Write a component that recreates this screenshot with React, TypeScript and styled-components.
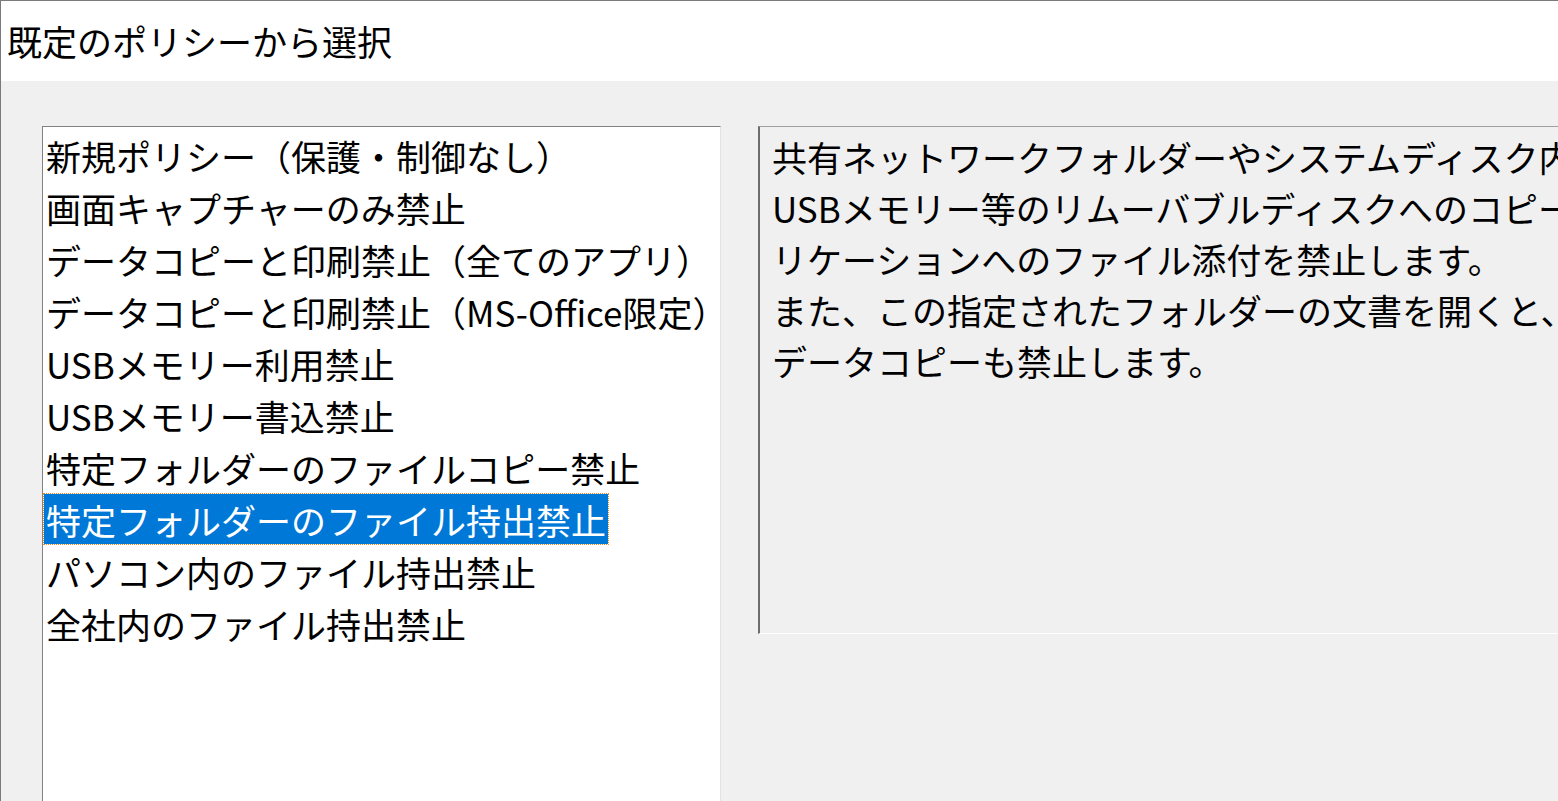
import * as React from 'react';
import styled, { createGlobalStyle } from 'styled-components';

const Global = createGlobalStyle`
	html, body { margin: 0; padding: 0; }
	body {
		width: 1558px;
		height: 801px;
		overflow: hidden;
		background: #f0f0f0;
		font-family: "Noto Sans CJK JP", "Noto Sans", sans-serif;
		color: #000;
	}
`;

const Window = styled.div`
	width: 1558px;
	height: 801px;
	border-left: 1px solid #7a7a7a;
	border-top: 1px solid #7a7a7a;
	box-sizing: border-box;
	display: flex;
	flex-direction: column;
`;

const Title = styled.div`
	height: 80px;
	background: #fff;
	font-size: 35px;
	line-height: 80px;
	padding-left: 6px;
	flex-shrink: 0;
`;

const Body = styled.div`
	flex: 1;
	display: flex;
	align-items: flex-start;
	gap: 37px;
	padding: 45px 0 0 41px;
	overflow: hidden;
`;

const ListBox = styled.div`
	width: 679px;
	height: 700px;
	flex-shrink: 0;
	background: #fff;
	border-left: 1px solid #828282;
	border-top: 1px solid #828282;
	border-right: 1px solid #e3e3e3;
	box-sizing: border-box;
	padding: 3px 0 0 1px;
	overflow: hidden;
`;

const Item = styled.div<{ $selected?: boolean }>`
	font-size: 35px;
	line-height: 52px;
	height: 52px;
	white-space: nowrap;
	span {
		display: inline-block;
		padding: 0 2px;
		height: 50px;
		background: ${p => (p.$selected ? '#0078d7' : 'transparent')};
		color: ${p => (p.$selected ? '#fff' : '#000')};
		outline: ${p => (p.$selected ? '1px dotted #e88a2a' : 'none')};
	}
`;

const Description = styled.div`
	flex: 1;
	height: 508px;
	border-left: 2px solid #6d6d6d;
	border-top: 1px solid #a0a0a0;
	border-bottom: 1px solid #fff;
	box-sizing: border-box;
	padding: 4px 0 0 12px;
	overflow: hidden;
	font-size: 35px;
	line-height: 51px;
	white-space: nowrap;
`;

const items = [
	'新規ポリシー（保護・制御なし）',
	'画面キャプチャーのみ禁止',
	'データコピーと印刷禁止（全てのアプリ）',
	'データコピーと印刷禁止（MS-Office限定）',
	'USBメモリー利用禁止',
	'USBメモリー書込禁止',
	'特定フォルダーのファイルコピー禁止',
	'特定フォルダーのファイル持出禁止',
	'パソコン内のファイル持出禁止',
	'全社内のファイル持出禁止'
];

const lines = [
	'共有ネットワークフォルダーやシステムディスク内の特定フォルダーから、',
	'USBメモリー等のリムーバブルディスクへのコピー/保存や、メールアプ',
	'リケーションへのファイル添付を禁止します。',
	'また、この指定されたフォルダーの文書を開くと、画面キャプチャーや',
	'データコピーも禁止します。'
];

export default function App() {
	return (
		<Window>
			<Global />
			<Title>既定のポリシーから選択</Title>
			<Body>
				<ListBox>
					{items.map((t, i) => (
						<Item key={i} $selected={i === 7}>
							<span>{t}</span>
						</Item>
					))}
				</ListBox>
				<Description>
					{lines.map((l, i) => (
						<div key={i}>{l}</div>
					))}
				</Description>
			</Body>
		</Window>
	);
}
